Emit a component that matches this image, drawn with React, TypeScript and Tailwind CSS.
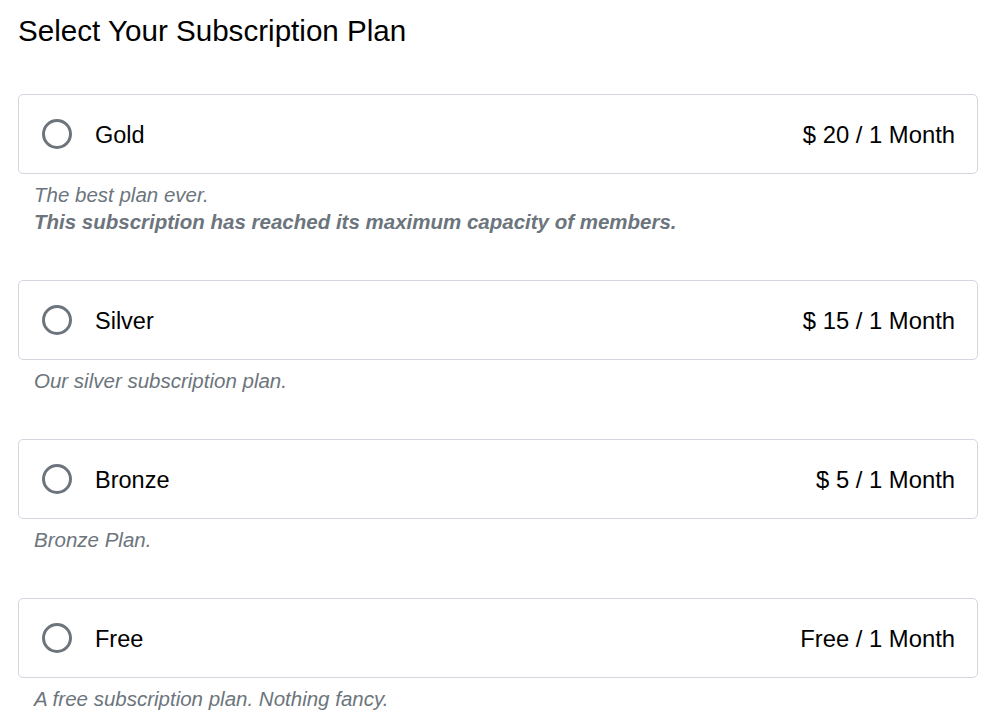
const plans = [
  { name: 'Gold', price: '$ 20 / 1 Month', desc: 'The best plan ever.', note: 'This subscription has reached its maximum capacity of members.' },
  { name: 'Silver', price: '$ 15 / 1 Month', desc: 'Our silver subscription plan.' },
  { name: 'Bronze', price: '$ 5 / 1 Month', desc: 'Bronze Plan.' },
  { name: 'Free', price: 'Free / 1 Month', desc: 'A free subscription plan. Nothing fancy.' },
]

export default function App() {
  return (
    <div className="min-h-screen bg-white px-[18px] pt-[13px] text-black" style={{ fontFamily: '"Liberation Sans", Arial, sans-serif' }}>
      <h1 className="text-[29.6px] leading-[36px] mb-[45px]">Select Your Subscription Plan</h1>
      <div className="w-[960px]">
        {plans.map((p) => (
          <div key={p.name} className="mb-[45px]">
            <label className="flex h-[80px] items-center rounded-[5px] border border-[#d6d6e0] pl-[23px] pr-[22px] cursor-pointer">
              <span className="h-[30px] w-[30px] shrink-0 rounded-full border-[3px] border-[#6c757d]" />
              <span className="ml-[23px] pt-[3px] text-[23.5px]">{p.name}</span>
              <span className="ml-auto pt-[2px] text-[23.8px]">{p.price}</span>
            </label>
            <div className="mt-[7px] pl-[16px] text-[20.5px] leading-[27px] italic text-[#6c757d]">
              <p>{p.desc}</p>
              {p.note && <p className="font-bold">{p.note}</p>}
            </div>
          </div>
        ))}
      </div>
    </div>
  )
}
